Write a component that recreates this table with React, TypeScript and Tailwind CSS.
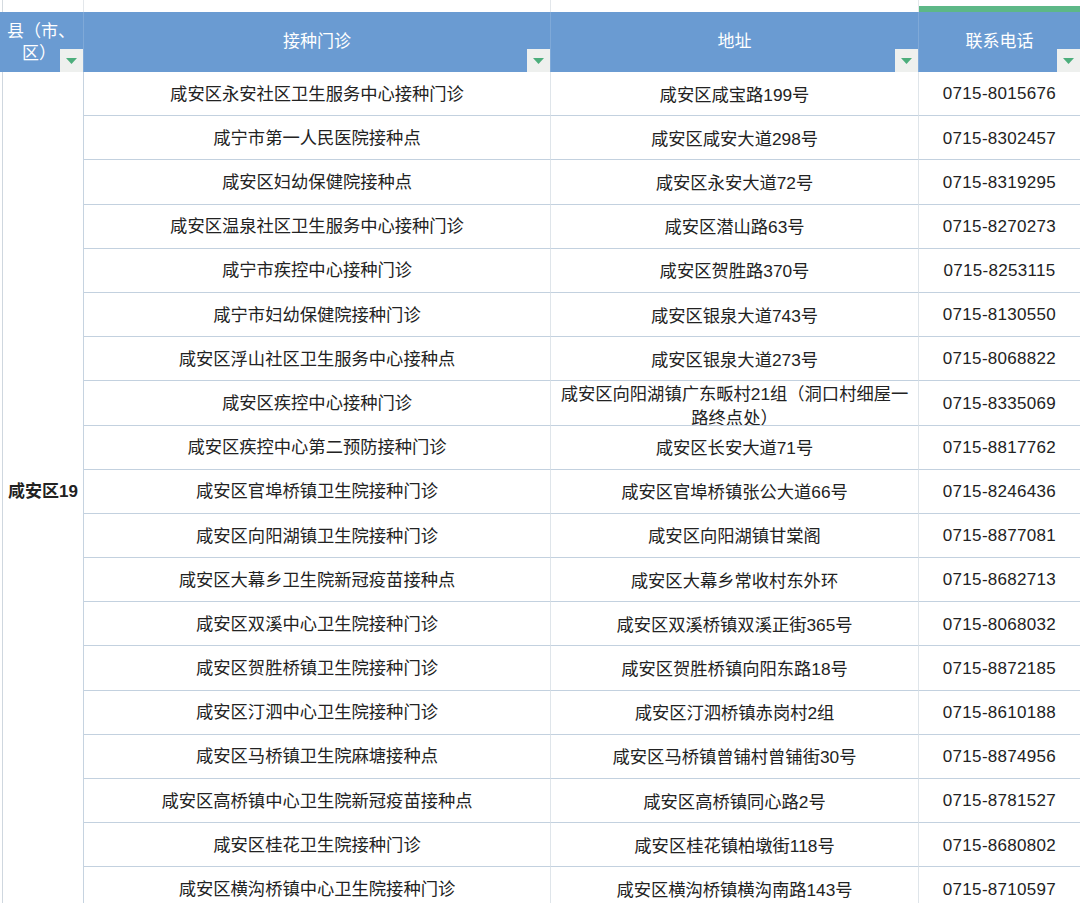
import React from "react";

const rows = [
  ["咸安区永安社区卫生服务中心接种门诊", "咸安区咸宝路199号", "0715-8015676"],
  ["咸宁市第一人民医院接种点", "咸安区咸安大道298号", "0715-8302457"],
  ["咸安区妇幼保健院接种点", "咸安区永安大道72号", "0715-8319295"],
  ["咸安区温泉社区卫生服务中心接种门诊", "咸安区潜山路63号", "0715-8270273"],
  ["咸宁市疾控中心接种门诊", "咸安区贺胜路370号", "0715-8253115"],
  ["咸宁市妇幼保健院接种门诊", "咸安区银泉大道743号", "0715-8130550"],
  ["咸安区浮山社区卫生服务中心接种点", "咸安区银泉大道273号", "0715-8068822"],
  ["咸安区疾控中心接种门诊", "咸安区向阳湖镇广东畈村21组（洞口村细屋一路终点处）", "0715-8335069"],
  ["咸安区疾控中心第二预防接种门诊", "咸安区长安大道71号", "0715-8817762"],
  ["咸安区官埠桥镇卫生院接种门诊", "咸安区官埠桥镇张公大道66号", "0715-8246436"],
  ["咸安区向阳湖镇卫生院接种门诊", "咸安区向阳湖镇甘棠阁", "0715-8877081"],
  ["咸安区大幕乡卫生院新冠疫苗接种点", "咸安区大幕乡常收村东外环", "0715-8682713"],
  ["咸安区双溪中心卫生院接种门诊", "咸安区双溪桥镇双溪正街365号", "0715-8068032"],
  ["咸安区贺胜桥镇卫生院接种门诊", "咸安区贺胜桥镇向阳东路18号", "0715-8872185"],
  ["咸安区汀泗中心卫生院接种门诊", "咸安区汀泗桥镇赤岗村2组", "0715-8610188"],
  ["咸安区马桥镇卫生院麻塘接种点", "咸安区马桥镇曾铺村曾铺街30号", "0715-8874956"],
  ["咸安区高桥镇中心卫生院新冠疫苗接种点", "咸安区高桥镇同心路2号", "0715-8781527"],
  ["咸安区桂花卫生院接种门诊", "咸安区桂花镇柏墩街118号", "0715-8680802"],
  ["咸安区横沟桥镇中心卫生院接种门诊", "咸安区横沟桥镇横沟南路143号", "0715-8710597"],
];

const font = { fontFamily: '"Liberation Sans", "Noto Sans CJK SC", sans-serif' };

function Filter() {
  return (
    <div className="absolute bottom-0 right-0 w-[23px] h-[23px] bg-[#eef0ee] flex items-center justify-center">
      <svg width="11" height="6" viewBox="0 0 11 6">
        <path d="M0 0 L11 0 L5.5 6 Z" fill="#4cae7c" />
      </svg>
    </div>
  );
}

export default function App() {
  return (
    <div className="w-[1080px] h-[903px] overflow-hidden bg-white text-[#222]" style={font}>
      <div className="grid grid-cols-[3px_81px_467px_368px_161px]">
        {/* top strip */}
        <div className="h-[12px] border-r border-[#d5dbe0]" />
        <div className="h-[12px] border-r border-[#e3e7eb]" />
        <div className="h-[12px] border-r border-[#e3e7eb]" />
        <div className="h-[12px] border-r border-[#e3e7eb]" />
        <div className="h-[12px] flex flex-col justify-end">
          <div className="h-[6px] bg-[#5db887]" />
        </div>

        {/* header */}
        <div className="h-[60px] bg-[#6a9bd2]" />
        <div className="relative h-[60px] bg-[#6a9bd2] border-r border-[#7fa9d8] text-white text-[17px] leading-[22px] flex flex-col justify-center items-center pr-[4px] pt-[2px]">
          <div>县（市、</div>
          <div className="pr-[4px]">区）</div>
          <Filter />
        </div>
        <div className="relative h-[60px] bg-[#6a9bd2] border-r border-[#7fa9d8] text-white text-[17px] flex items-center justify-center">
          接种门诊
          <Filter />
        </div>
        <div className="relative h-[60px] bg-[#6a9bd2] border-r border-[#7fa9d8] text-white text-[17px] flex items-center justify-center">
          地址
          <Filter />
        </div>
        <div className="relative h-[60px] bg-[#6a9bd2] text-white text-[17px] flex items-center justify-center pb-[1px]">
          联系电话
          <Filter />
        </div>
      </div>

      {/* body */}
      <div className="grid grid-cols-[3px_81px_467px_368px_161px] grid-rows-[repeat(19,44.2px)]">
        <div className="row-span-19 border-r border-[#cfd7df]" />
        <div className="row-span-19 border-r border-[#c6d3e0] flex items-center pl-[5px] text-[17px] font-bold">
          咸安区19
        </div>
        {rows.map(([name, addr, tel]) => {
          const long = addr.length > 20;
          return (
            <React.Fragment key={tel}>
              <div className="border-b border-r border-b-[#c3d1df] border-r-[#dfe5ea] flex items-center justify-center text-[17.3px] overflow-hidden pt-[2px]">
                {name}
              </div>
              <div
                className={`border-b border-r border-b-[#c3d1df] border-r-[#dfe5ea] flex items-center justify-center text-center px-[6px] text-[17.3px] leading-[24px] overflow-hidden ${
                  long ? "pt-[6px]" : "pt-[2px]"
                }`}
              >
                {addr}
              </div>
              <div className="border-b border-b-[#c3d1df] flex items-center justify-center text-[17px] tracking-[0.3px] overflow-hidden pt-[1px]">
                {tel}
              </div>
            </React.Fragment>
          );
        })}
      </div>
    </div>
  );
}
